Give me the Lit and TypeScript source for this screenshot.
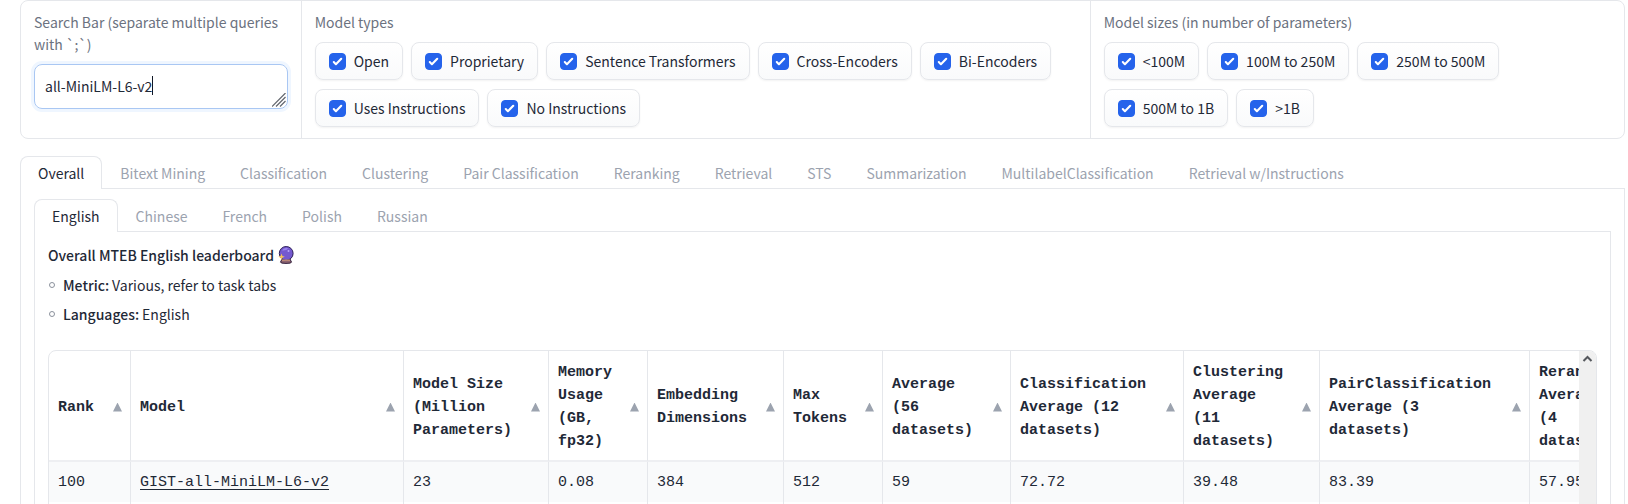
import { LitElement, html, css, svg } from "lit";
import { customElement, state } from "lit/decorators.js";

interface Column {
  title: string;
  width: number;
}

const MODEL_TYPES = [
  "Open",
  "Proprietary",
  "Sentence Transformers",
  "Cross-Encoders",
  "Bi-Encoders",
  "Uses Instructions",
  "No Instructions",
];

const MODEL_SIZES = ["<100M", "100M to 250M", "250M to 500M", "500M to 1B", ">1B"];

const TASKS = [
  "Overall",
  "Bitext Mining",
  "Classification",
  "Clustering",
  "Pair Classification",
  "Reranking",
  "Retrieval",
  "STS",
  "Summarization",
  "MultilabelClassification",
  "Retrieval w/Instructions",
];

const LANGUAGES = ["English", "Chinese", "French", "Polish", "Russian"];

const COLUMNS: Column[] = [
  { title: "Rank", width: 82 },
  { title: "Model", width: 273 },
  { title: "Model Size (Million Parameters)", width: 145 },
  { title: "Memory Usage (GB, fp32)", width: 99 },
  { title: "Embedding Dimensions", width: 136 },
  { title: "Max Tokens", width: 99 },
  { title: "Average (56 datasets)", width: 128 },
  { title: "Classification Average (12 datasets)", width: 173 },
  { title: "Clustering Average (11 datasets)", width: 136 },
  { title: "PairClassification Average (3 datasets)", width: 210 },
  { title: "Reranking Average (4 datasets)", width: 124 },
];

const ROWS = [
  ["100", "GIST-all-MiniLM-L6-v2", "23", "0.08", "384", "512", "59", "72.72", "39.48", "83.39", "57.95"],
  ["", "", "", "", "", "", "", "", "", "", ""],
];

const crystalBall = svg`
  <svg class="ball" viewBox="0 0 16 18" aria-hidden="true">
    <path d="M4 13h8l1.5 3.2q-.2 1.2-5.5 1.2t-5.500-1.200z" fill="#8d6470" stroke="#33203f" stroke-width="1"/>
    <circle cx="8.200" cy="7.400" r="6.900" fill="#7459cf" stroke="#2f2259" stroke-width="1"/>
    <path d="M4 4.500Q6.500 1 10.500 2.500Q8 5 4 4.500z" fill="#9b83ee"/>
    <circle cx="10.500" cy="5" r="1" fill="#b7a5fa"/>
    <path d="M4 14.200h8" stroke="#c59079" stroke-width="1.400"/>
    <path d="M3.500 7.500l.9 2.400 2.400.9-2.400.9-.9 2.400-.9-2.400-2.400-.9 2.400-.9z" fill="#f3c45b"/>
  </svg>`;

const baseStyles = css`
  *,
  *::before,
  *::after {
    box-sizing: border-box;
  }
`;

@customElement("check-group")
export class CheckGroup extends LitElement {
  static properties = { heading: {}, options: { attribute: false } };
  declare heading: string;
  declare options: string[];

  static styles = [
    baseStyles,
    css`
      :host {
        display: block;
      }
      .group {
        margin: 0;
        padding: 0;
        border: 0;
        min-width: 0;
      }
      .heading {
        padding: 0;
        margin-bottom: 9px;
        color: #6b7280;
      }
      .options {
        display: flex;
        flex-wrap: wrap;
        gap: 9px 8px;
      }
      .chip {
        display: flex;
        align-items: center;
        gap: 8px;
        height: 38px;
        padding: 0 13px;
        border: 1px solid #e5e7eb;
        border-radius: 8px;
        background: linear-gradient(to top, #f9fafb, #ffffff);
        box-shadow: 0 1px 2px rgba(0, 0, 0, 0.05);
        cursor: pointer;
      }
      .box {
        appearance: none;
        width: 17px;
        height: 17px;
        margin: 0;
        border: 1px solid #d1d5db;
        border-radius: 4px;
        background-color: #ffffff;
      }
      .box:checked {
        border-color: #2563eb;
        background: #2563eb
          url("data:image/svg+xml,%3Csvg viewBox='0 0 16 16' fill='white' xmlns='http://www.w3.org/2000/svg'%3E%3Cpath d='M12.207 4.793a1 1 0 010 1.414l-5 5a1 1 0 01-1.414 0l-2-2a1 1 0 011.414-1.414L6.500 9.086l4.293-4.293a1 1 0 011.414 0z'/%3E%3C/svg%3E")
          center / 17px 17px;
      }
    `,
  ];

  render() {
    return html`
      <fieldset class="group">
        <legend class="heading">${this.heading}</legend>
        <div class="options">
          ${this.options.map(
            (option) => html`<label class="chip"><input class="box" type="checkbox" checked />${option}</label>`
          )}
        </div>
      </fieldset>
    `;
  }
}

@customElement("tab-bar")
export class TabBar extends LitElement {
  static properties = { tabs: { attribute: false }, selected: { state: true } };
  declare tabs: string[];
  declare selected: number;

  constructor() {
    super();
    this.tabs = [];
    this.selected = 0;
  }

  static styles = [
    baseStyles,
    css`
      :host {
        display: block;
      }
      .bar {
        display: flex;
        height: 33px;
        border-bottom: 1px solid #e5e7eb;
      }
      .tab {
        height: 33px;
        padding: 0 16px 0 17px;
        border: 1px solid transparent;
        border-bottom: 0;
        border-radius: 8px 8px 0 0;
        background: none;
        color: #9ca3af;
        font: inherit;
        white-space: nowrap;
        cursor: pointer;
      }
      .tab[aria-selected="true"] {
        padding: 0 17px;
        border-color: #e5e7eb;
        background: #ffffff;
        color: #1f2937;
      }
    `,
  ];

  render() {
    return html`
      <div class="bar" role="tablist">
        ${this.tabs.map(
          (tab, i) => html`<button
            class="tab"
            role="tab"
            aria-selected=${i === this.selected ? "true" : "false"}
            @click=${() => (this.selected = i)}
          >${tab}</button>`
        )}
      </div>
    `;
  }
}

@customElement("app-root")
export class AppRoot extends LitElement {
  @state() query = "all-MiniLM-L6-v2";

  static styles = [
    baseStyles,
    css`
      :host {
        display: flex;
        flex-direction: column;
        height: 100vh;
        overflow: hidden;
        padding: 0 3px 0 20px;
        background: #ffffff;
        color: #1f2937;
        font: 14px/22px "Noto Sans CJK SC", "Noto Sans", sans-serif;
      }
      .filters {
        display: grid;
        grid-template-columns: 280fr 790fr 535fr;
        flex-shrink: 0;
        border: 1px solid #e5e7eb;
        border-radius: 8px;
      }
      .filter {
        padding: 10px 13px 11px;
        border-left: 1px solid #e5e7eb;
      }
      .filter:first-child {
        border-left: 0;
      }
      .search-label {
        display: block;
        margin-bottom: 9px;
        color: #6b7280;
      }
      .search {
        position: relative;
        display: flex;
        align-items: center;
        height: 45px;
        padding: 0 10px 2px;
        border: 1px solid #a9c7f3;
        border-radius: 8px;
        box-shadow: 0 0 0 3px #eff6ff;
        cursor: text;
      }
      .query {
        field-sizing: content;
        max-width: 100%;
        height: 22px;
        padding: 0;
        border: 0;
        outline: 0;
        resize: none;
        overflow: hidden;
        background: none;
        color: inherit;
        font: inherit;
        white-space: nowrap;
        caret-color: transparent;
      }
      .caret {
        width: 1px;
        height: 19px;
        background: #111827;
      }
      .grip {
        position: absolute;
        right: 1px;
        bottom: 1px;
        width: 14px;
        height: 14px;
      }
      .tasks {
        flex-shrink: 0;
        margin-top: 17px;
      }
      .pane {
        flex: 1 0 auto;
        padding: 10px 13px 0;
        border: 1px solid #e5e7eb;
        border-top: 0;
        display: flex;
        flex-direction: column;
        min-width: 0;
      }
      .board {
        flex: 1 0 auto;
        padding: 12px 13px 0;
        border: 1px solid #e5e7eb;
        border-top: 0;
        min-width: 0;
      }
      .title {
        display: flex;
        align-items: center;
        gap: 4px;
        margin: 0;
        font: inherit;
        font-weight: 500;
      }
      .ball {
        width: 16px;
        height: 18px;
      }
      .facts {
        margin: 8px 0 25px;
        padding: 0;
        list-style: none;
        display: grid;
        gap: 7px;
      }
      .fact {
        display: flex;
        align-items: center;
        gap: 3px;
      }
      .fact::before {
        content: "";
        width: 6px;
        height: 6px;
        margin: 0 5px 0 1px;
        border: 1px solid #8b919c;
        border-radius: 50%;
      }
      .strong {
        font-weight: 500;
      }
      .frame {
        display: flex;
        border: 1px solid #e5e7eb;
        border-radius: 8px 8px 0 0;
        overflow: hidden;
      }
      .scroller {
        flex: 1;
        min-width: 0;
        overflow: hidden;
      }
      .scrollbar {
        width: 17px;
        flex-shrink: 0;
        padding-top: 2px;
        background: #f0f0f0;
        text-align: center;
        line-height: 0;
      }
      .arrow {
        width: 11px;
        height: 11px;
      }
      .table {
        table-layout: fixed;
        width: 0;
        border-collapse: separate;
        border-spacing: 0;
        font: 15px/23px "Liberation Mono", monospace;
      }
      .table th,
      .table td {
        padding: 0 9px;
        border-right: 1px solid #e5e7eb;
        text-align: left;
        white-space: nowrap;
      }
      .table th {
        height: 111px;
        padding: 3px 8px 0 9px;
        border-bottom: 2px solid #eeeff2;
        white-space: normal;
      }
      .table td {
        height: 40px;
      }
      .table tbody tr:nth-child(odd) {
        background: #f9fafb;
      }
      .head {
        display: flex;
        align-items: center;
        justify-content: space-between;
        gap: 11px;
      }
      .sort {
        flex-shrink: 0;
        width: 9px;
        height: 9px;
        padding: 0;
        border: 0;
        background: #9ca3af;
        clip-path: polygon(50% 0, 100% 100%, 0 100%);
        cursor: pointer;
      }
      .link {
        color: inherit;
        text-decoration: underline;
        text-underline-offset: 3px;
      }
    `,
  ];

  private cell(value: string, index: number) {
    return index === 1 && value ? html`<a class="link" href="#model">${value}</a>` : value;
  }

  render() {
    return html`
      <section class="filters">
        <div class="filter">
          <label class="search-label" for="query">Search Bar (separate multiple queries with \`;\`)</label>
          <div class="search">
            <textarea
              class="query"
              id="query"
              rows="1"
              .value=${this.query}
              @input=${(e: Event) => (this.query = (e.target as HTMLTextAreaElement).value)}
            ></textarea>
            <span class="caret"></span>
            <svg class="grip" viewBox="0 0 14 14" aria-hidden="true">
              <path d="M0 13.500L13.500 0M4 13.500L13.500 4M8 13.500L13.500 8" stroke="#62666e" stroke-width="1.200" />
            </svg>
          </div>
        </div>
        <check-group class="filter" heading="Model types" .options=${MODEL_TYPES}></check-group>
        <check-group
          class="filter"
          heading="Model sizes (in number of parameters)"
          .options=${MODEL_SIZES}
        ></check-group>
      </section>

      <tab-bar class="tasks" .tabs=${TASKS}></tab-bar>
      <main class="pane">
        <tab-bar .tabs=${LANGUAGES}></tab-bar>
        <section class="board">
          <h1 class="title">Overall MTEB English leaderboard ${crystalBall}</h1>
          <ul class="facts">
            <li class="fact"><span class="strong">Metric:</span> <span>Various, refer to task tabs</span></li>
            <li class="fact"><span class="strong">Languages:</span> <span>English</span></li>
          </ul>
          <div class="frame">
            <div class="scroller">
              <table class="table">
                <colgroup>
                  ${COLUMNS.map((c) => html`<col style="width:${c.width}px" />`)}
                </colgroup>
                <thead>
                  <tr>
                    ${COLUMNS.map(
                      (c) => html`<th scope="col">
                        <div class="head">
                          <span>${c.title}</span>
                          <button class="sort" aria-label="Sort by ${c.title}"></button>
                        </div>
                      </th>`
                    )}
                  </tr>
                </thead>
                <tbody>
                  ${ROWS.map((row) => html`<tr>${row.map((v, i) => html`<td>${this.cell(v, i)}</td>`)}</tr>`)}
                </tbody>
              </table>
            </div>
            <div class="scrollbar">
              <svg class="arrow" viewBox="0 0 11 11" aria-hidden="true">
                <path d="M1.500 8L5.500 4L9.500 8" fill="none" stroke="#55585d" stroke-width="2" />
              </svg>
            </div>
          </div>
        </section>
      </main>
    `;
  }
}
